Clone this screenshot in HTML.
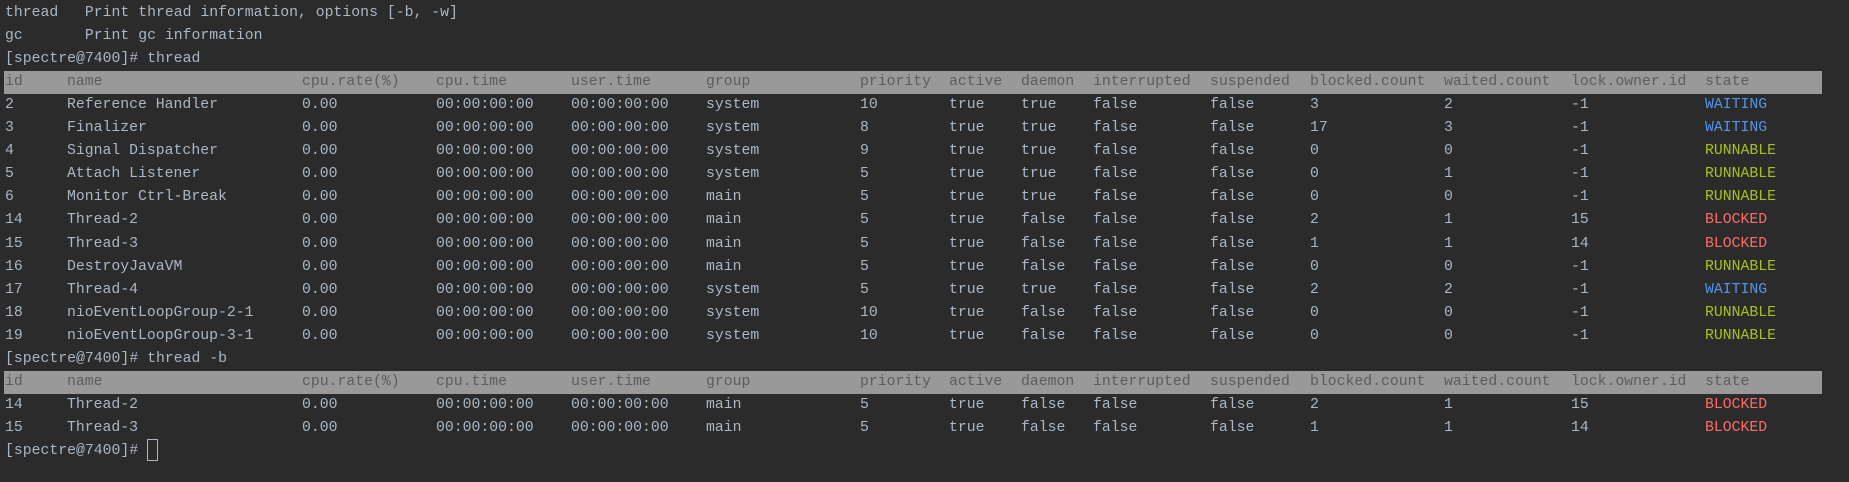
<!DOCTYPE html>
<html><head><meta charset="utf-8"><style>
html,body{margin:0;padding:0;background:#2b2b2b;width:1849px;height:482px;overflow:hidden}
body{font-family:"Liberation Mono",monospace;font-size:14.8px;color:#a9b7c6;position:relative}
.l{position:absolute;left:0;height:23.1px;line-height:23.1px;width:1849px;white-space:pre}
.l span{position:absolute;top:0}
.h{background:#999999;color:#5c5c5c;width:1818px;left:4px}
.h span{margin-left:-4px}
.w{color:#5394ec}.r{color:#a8c023}.b{color:#ff6b68}
.c0{left:5px}.c1{left:67px}.c2{left:302px}.c3{left:436px}.c4{left:571px}.c5{left:706px}.c6{left:860px}.c7{left:949px}.c8{left:1021px}.c9{left:1093px}.c10{left:1210px}.c11{left:1310px}.c12{left:1444px}.c13{left:1571px}.c14{left:1705px}
.cur{position:absolute;left:147px;top:439px;width:9px;height:20px;border:1px solid #a9b7c6}
</style></head><body>
<div class="l" style="top:1.5px"><span style="left:5px">thread   Print thread information, options [-b, -w]</span></div>
<div class="l" style="top:24.6px"><span style="left:5px">gc       Print gc information</span></div>
<div class="l" style="top:47.7px"><span style="left:5px">[spectre@7400]# thread</span></div>
<div class="l h" style="top:70.8px"><span class="c0">id</span><span class="c1">name</span><span class="c2">cpu.rate(%)</span><span class="c3">cpu.time</span><span class="c4">user.time</span><span class="c5">group</span><span class="c6">priority</span><span class="c7">active</span><span class="c8">daemon</span><span class="c9">interrupted</span><span class="c10">suspended</span><span class="c11">blocked.count</span><span class="c12">waited.count</span><span class="c13">lock.owner.id</span><span class="c14">state</span></div>
<div class="l" style="top:93.9px"><span class="c0">2</span><span class="c1">Reference Handler</span><span class="c2">0.00</span><span class="c3">00:00:00:00</span><span class="c4">00:00:00:00</span><span class="c5">system</span><span class="c6">10</span><span class="c7">true</span><span class="c8">true</span><span class="c9">false</span><span class="c10">false</span><span class="c11">3</span><span class="c12">2</span><span class="c13">-1</span><span class="c14 w">WAITING</span></div>
<div class="l" style="top:117.0px"><span class="c0">3</span><span class="c1">Finalizer</span><span class="c2">0.00</span><span class="c3">00:00:00:00</span><span class="c4">00:00:00:00</span><span class="c5">system</span><span class="c6">8</span><span class="c7">true</span><span class="c8">true</span><span class="c9">false</span><span class="c10">false</span><span class="c11">17</span><span class="c12">3</span><span class="c13">-1</span><span class="c14 w">WAITING</span></div>
<div class="l" style="top:140.1px"><span class="c0">4</span><span class="c1">Signal Dispatcher</span><span class="c2">0.00</span><span class="c3">00:00:00:00</span><span class="c4">00:00:00:00</span><span class="c5">system</span><span class="c6">9</span><span class="c7">true</span><span class="c8">true</span><span class="c9">false</span><span class="c10">false</span><span class="c11">0</span><span class="c12">0</span><span class="c13">-1</span><span class="c14 r">RUNNABLE</span></div>
<div class="l" style="top:163.2px"><span class="c0">5</span><span class="c1">Attach Listener</span><span class="c2">0.00</span><span class="c3">00:00:00:00</span><span class="c4">00:00:00:00</span><span class="c5">system</span><span class="c6">5</span><span class="c7">true</span><span class="c8">true</span><span class="c9">false</span><span class="c10">false</span><span class="c11">0</span><span class="c12">1</span><span class="c13">-1</span><span class="c14 r">RUNNABLE</span></div>
<div class="l" style="top:186.3px"><span class="c0">6</span><span class="c1">Monitor Ctrl-Break</span><span class="c2">0.00</span><span class="c3">00:00:00:00</span><span class="c4">00:00:00:00</span><span class="c5">main</span><span class="c6">5</span><span class="c7">true</span><span class="c8">true</span><span class="c9">false</span><span class="c10">false</span><span class="c11">0</span><span class="c12">0</span><span class="c13">-1</span><span class="c14 r">RUNNABLE</span></div>
<div class="l" style="top:209.4px"><span class="c0">14</span><span class="c1">Thread-2</span><span class="c2">0.00</span><span class="c3">00:00:00:00</span><span class="c4">00:00:00:00</span><span class="c5">main</span><span class="c6">5</span><span class="c7">true</span><span class="c8">false</span><span class="c9">false</span><span class="c10">false</span><span class="c11">2</span><span class="c12">1</span><span class="c13">15</span><span class="c14 b">BLOCKED</span></div>
<div class="l" style="top:232.5px"><span class="c0">15</span><span class="c1">Thread-3</span><span class="c2">0.00</span><span class="c3">00:00:00:00</span><span class="c4">00:00:00:00</span><span class="c5">main</span><span class="c6">5</span><span class="c7">true</span><span class="c8">false</span><span class="c9">false</span><span class="c10">false</span><span class="c11">1</span><span class="c12">1</span><span class="c13">14</span><span class="c14 b">BLOCKED</span></div>
<div class="l" style="top:255.6px"><span class="c0">16</span><span class="c1">DestroyJavaVM</span><span class="c2">0.00</span><span class="c3">00:00:00:00</span><span class="c4">00:00:00:00</span><span class="c5">main</span><span class="c6">5</span><span class="c7">true</span><span class="c8">false</span><span class="c9">false</span><span class="c10">false</span><span class="c11">0</span><span class="c12">0</span><span class="c13">-1</span><span class="c14 r">RUNNABLE</span></div>
<div class="l" style="top:278.7px"><span class="c0">17</span><span class="c1">Thread-4</span><span class="c2">0.00</span><span class="c3">00:00:00:00</span><span class="c4">00:00:00:00</span><span class="c5">system</span><span class="c6">5</span><span class="c7">true</span><span class="c8">true</span><span class="c9">false</span><span class="c10">false</span><span class="c11">2</span><span class="c12">2</span><span class="c13">-1</span><span class="c14 w">WAITING</span></div>
<div class="l" style="top:301.8px"><span class="c0">18</span><span class="c1">nioEventLoopGroup-2-1</span><span class="c2">0.00</span><span class="c3">00:00:00:00</span><span class="c4">00:00:00:00</span><span class="c5">system</span><span class="c6">10</span><span class="c7">true</span><span class="c8">false</span><span class="c9">false</span><span class="c10">false</span><span class="c11">0</span><span class="c12">0</span><span class="c13">-1</span><span class="c14 r">RUNNABLE</span></div>
<div class="l" style="top:324.9px"><span class="c0">19</span><span class="c1">nioEventLoopGroup-3-1</span><span class="c2">0.00</span><span class="c3">00:00:00:00</span><span class="c4">00:00:00:00</span><span class="c5">system</span><span class="c6">10</span><span class="c7">true</span><span class="c8">false</span><span class="c9">false</span><span class="c10">false</span><span class="c11">0</span><span class="c12">0</span><span class="c13">-1</span><span class="c14 r">RUNNABLE</span></div>
<div class="l" style="top:348.0px"><span style="left:5px">[spectre@7400]# thread -b</span></div>
<div class="l h" style="top:371.1px"><span class="c0">id</span><span class="c1">name</span><span class="c2">cpu.rate(%)</span><span class="c3">cpu.time</span><span class="c4">user.time</span><span class="c5">group</span><span class="c6">priority</span><span class="c7">active</span><span class="c8">daemon</span><span class="c9">interrupted</span><span class="c10">suspended</span><span class="c11">blocked.count</span><span class="c12">waited.count</span><span class="c13">lock.owner.id</span><span class="c14">state</span></div>
<div class="l" style="top:394.2px"><span class="c0">14</span><span class="c1">Thread-2</span><span class="c2">0.00</span><span class="c3">00:00:00:00</span><span class="c4">00:00:00:00</span><span class="c5">main</span><span class="c6">5</span><span class="c7">true</span><span class="c8">false</span><span class="c9">false</span><span class="c10">false</span><span class="c11">2</span><span class="c12">1</span><span class="c13">15</span><span class="c14 b">BLOCKED</span></div>
<div class="l" style="top:417.3px"><span class="c0">15</span><span class="c1">Thread-3</span><span class="c2">0.00</span><span class="c3">00:00:00:00</span><span class="c4">00:00:00:00</span><span class="c5">main</span><span class="c6">5</span><span class="c7">true</span><span class="c8">false</span><span class="c9">false</span><span class="c10">false</span><span class="c11">1</span><span class="c12">1</span><span class="c13">14</span><span class="c14 b">BLOCKED</span></div>
<div class="l" style="top:440.4px"><span style="left:5px">[spectre@7400]#</span></div>
<div class="cur"></div>
</body></html>
